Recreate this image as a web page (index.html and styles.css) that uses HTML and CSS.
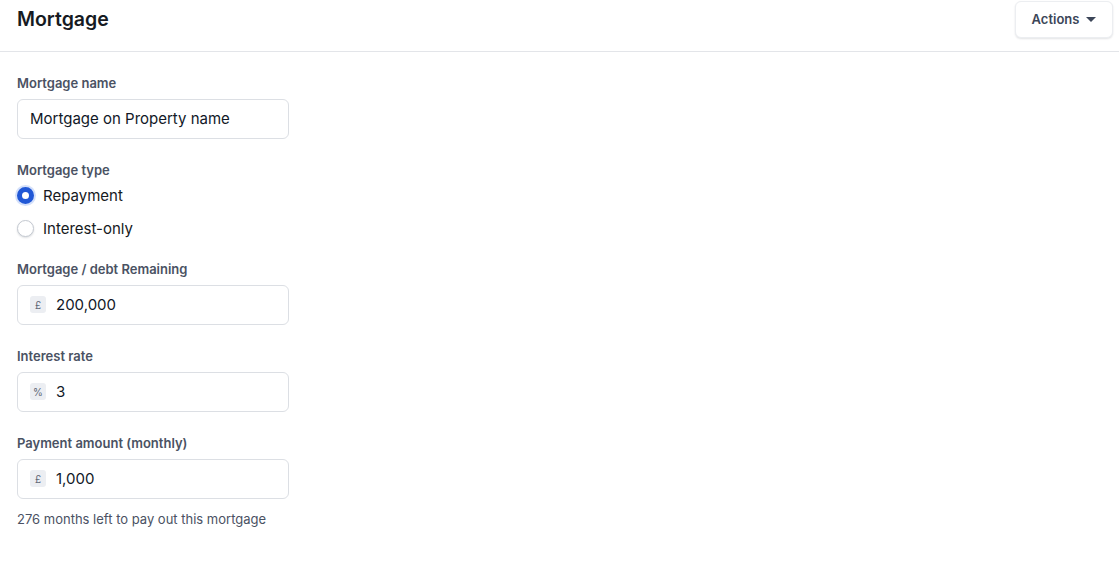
FILE: index.html
```html
<!DOCTYPE html>
<html lang="en">

<head>
    <meta charset="UTF-8">
    <meta name="viewport" content="width=device-width, initial-scale=1.0">
    <link rel="stylesheet" href="styles.css">
    <title>Mortgage</title>
</head>

<body>
    <header class="page-header">
        <h1>Mortgage</h1>
        <button class="actions-button">Actions <span class="caret"></span></button>
    </header>

    <main class="mortgage-form">
        <div class="field">
            <label for="mortgage-name">Mortgage name</label>
            <div class="input-box">
                <input type="text" id="mortgage-name" value="Mortgage on Property name">
            </div>
        </div>

        <!-- Mortgage type -->
        <div class="field radio-field">
            <label>Mortgage type</label>
            <div class="radio-row">
                <input type="radio" id="type-repayment" name="type" checked>
                <label for="type-repayment">Repayment</label>
            </div>
            <div class="radio-row">
                <input type="radio" id="type-interest" name="type">
                <label for="type-interest">Interest-only</label>
            </div>
        </div>

        <div class="field">
            <label for="debt">Mortgage / debt Remaining</label>
            <div class="input-box">
                <span class="unit">£</span>
                <input type="text" id="debt" value="200,000">
            </div>
        </div>

        <div class="field">
            <label for="rate">Interest rate</label>
            <div class="input-box">
                <span class="unit">%</span>
                <input type="text" id="rate" value="3">
            </div>
        </div>

        <div class="field">
            <label for="payment">Payment amount (monthly)</label>
            <div class="input-box">
                <span class="unit">£</span>
                <input type="text" id="payment" value="1,000">
            </div>
            <p class="hint">276 months left to pay out this mortgage</p>
        </div>
    </main>
</body>

</html>
```

FILE: styles.css
```css
body {
    font-family: 'Inter', 'Liberation Sans', sans-serif;
    background: #fff;
    margin: 0;
    padding: 0;
    color: #111827;
}

.page-header {
    display: flex;
    justify-content: space-between;
    align-items: center;
    padding: 1px 6px 13px 17px;
    border-bottom: 1px solid #e3e5e9;
}

h1 {
    margin: 0;
    font-size: 19.5px;
    font-weight: 600;
    line-height: 37px;
    color: #161a22;
}

.actions-button {
    display: flex;
    align-items: center;
    gap: 7px;
    height: 37px;
    width: 98px;
    justify-content: center;
    padding: 0 0 2px 0;
    font-family: inherit;
    font-size: 13px;
    font-weight: 600;
    color: #3c4658;
    background: #fff;
    border: 1px solid #eceef1;
    border-radius: 6px;
    box-shadow: 0 1px 2px rgba(16, 24, 40, 0.12);
    cursor: pointer;
}

.caret {
    width: 0;
    height: 0;
    margin-top: 2px;
    border-left: 5px solid transparent;
    border-right: 5px solid transparent;
    border-top: 5px solid #3c4658;
}

.mortgage-form {
    padding: 21px 17px;
    width: 272px;
}

.field {
    margin-bottom: 21px;
}

.field > label {
    display: block;
    font-size: 13px;
    font-weight: 600;
    line-height: 20px;
    color: #4a5263;
    margin-bottom: 6px;
}

.input-box {
    display: flex;
    align-items: center;
    gap: 10px;
    height: 40px;
    box-sizing: border-box;
    padding: 0 12px 1px;
    border: 1px solid #dcdfe4;
    border-radius: 6px;
}

.input-box input {
    flex: 1;
    min-width: 0;
    border: none;
    outline: none;
    padding: 0;
    font-family: inherit;
    font-size: 15px;
    color: #111827;
    background: transparent;
}

.unit {
    display: inline-flex;
    align-items: center;
    justify-content: center;
    width: 16px;
    height: 17px;
    border-radius: 3px;
    background: #eceef2;
    font-size: 10px;
    color: #5d6675;
}

/* radios */
.radio-field > label {
    margin-bottom: 3px;
}

.radio-field {
    margin-bottom: 19px;
}

.radio-row {
    display: flex;
    align-items: center;
    gap: 9px;
    height: 24px;
    margin-bottom: 9px;
}

.radio-row:last-child {
    margin-bottom: 0;
}

.radio-row label {
    font-size: 15px;
    color: #161a22;
}

.radio-row input {
    appearance: none;
    margin: 0;
    width: 17px;
    height: 17px;
    border-radius: 50%;
    border: 1.5px solid #c4c9d1;
    background: #fff;
    box-shadow: 0 1px 2px rgba(16, 24, 40, 0.15);
}

.radio-row input:checked {
    border: 5px solid #2158d6;
    background: #fff;
    box-shadow: 0 0 0 2px #d4e0fa;
}

.hint {
    margin: 12px 0 0;
    font-size: 13px;
    color: #4a5263;
}
```
